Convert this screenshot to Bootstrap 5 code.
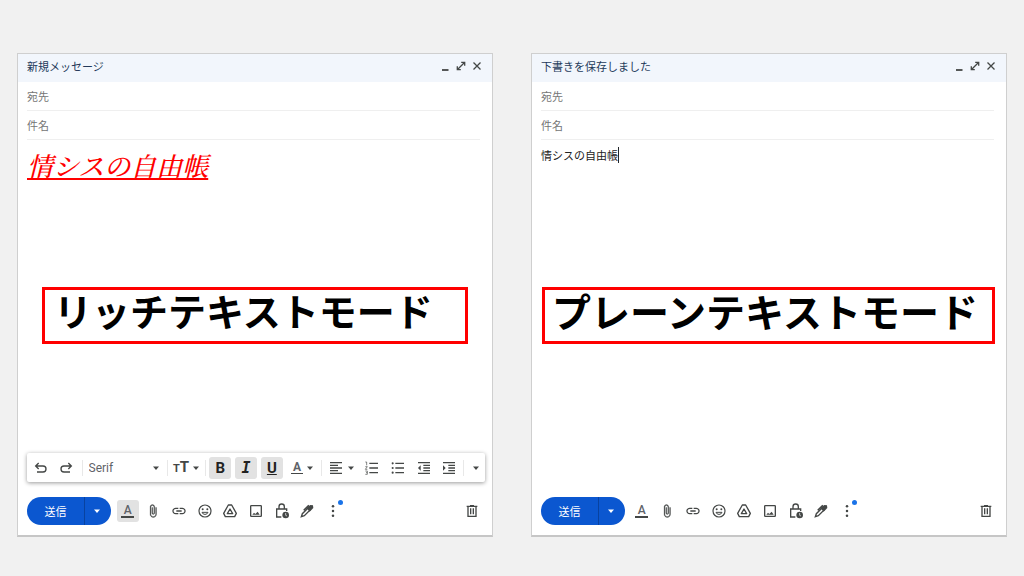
<!DOCTYPE html>
<html lang="ja">
<head>
<meta charset="utf-8">
<meta name="viewport" content="width=device-width, initial-scale=1">
<title>リッチテキストモードとプレーンテキストモード</title>
<link href="https://cdn.jsdelivr.net/npm/bootstrap@5.3.0/dist/css/bootstrap.min.css" rel="stylesheet">
<style>
body { background: #f1f1f1; font-family: "Noto Sans CJK JP", sans-serif; font-size: 11px; line-height: 16px; color: #222; }
svg { display: block; flex: none; }
.pane-grid { padding: 53px 17px 39px; gap: 38px; }
.composer { background: #fff; border: 1px solid #cfcfcf; border-bottom: 2px solid #c6c6c6; min-height: 484px; min-width: 0; }
.composer-head { background: #f2f6fc; color: #243a5a; height: 28px; padding: 0 7px 4px 9px; }
.composer-head h2 { font-size: 11px; line-height: 16px; font-weight: 400; }
.plain-btn { background: none; border: 0; padding: 0; color: #444746; display: flex; align-items: center; justify-content: center; border-radius: 3px; height: 22px; }
.win-btn { width: 16px; }
.field { height: 29px; margin: 0 12px 0 9px; border-bottom: 1px solid #efefef; }
.field input { border: 0; padding: 0; width: 100%; height: 28px; font-size: 11px; outline: 0; background: transparent; }
.field input::placeholder { color: #757575; opacity: 1; }
.message { min-height: 147px; padding: 7px 9px; outline: 0; }
.message-rich { font-family: "Noto Serif CJK JP", "Noto Sans CJK JP", serif; font-size: 26px; line-height: 36px; font-weight: 500; color: #f00; }
.message-rich em { text-decoration-thickness: 2px; }
.mode-label { border: 3px solid #f00; height: 57px; padding: 0 9px; font-size: 38px; line-height: 40px; font-weight: 700; color: #000; white-space: nowrap; }
.mode-label-wide { font-size: 39px; padding: 0 7px; margin-left: 10px; margin-right: 11px; }
.format-bar { height: 29px; margin: 0 7px 0 9px; padding-left: 2px; border-radius: 2px; box-shadow: 0 1px 4px rgba(0,0,0,.4); font-family: Roboto, sans-serif; }
.w-step { width: 25px; }
.w-key { width: 22px; }
.w-tail { width: 18px; }
.w-drop { width: 32px; gap: 3px; }
.pressed { background: #e2e2e2; color: #222; }
.rule-v { width: 1px; height: 16px; background: #e8e8e8; margin: 0 3px; flex: none; }
.font-pick { appearance: none; border: 0; padding: 0 0 0 3px; width: 79px; height: 22px; color: #5f6368; font-size: 12px;
  background: url("data:image/svg+xml,%3Csvg xmlns='http://www.w3.org/2000/svg' viewBox='0 0 8 8'%3E%3Cpath d='M1 2.5h6L4 6z' fill='%23444746'/%3E%3C/svg%3E") no-repeat right 4px center / 8px 8px; }
.glyph { font-size: 15px; line-height: 16px; font-weight: 700; }
.glyph-mono { font-family: "DejaVu Sans Mono", monospace; }
.t-small { font-size: 11px; line-height: 14px; font-weight: 700; }
.t-large { font-size: 15px; line-height: 14px; font-weight: 700; }
.tinted { font-family: Roboto, sans-serif; font-weight: 500; font-size: 12px; line-height: 11px; width: 13px; border-bottom: 2px solid #444746; text-align: center; color: #5f6368; }
.tinted-sm { width: 12px; border-bottom-width: 1px; font-weight: 700; }
.action-bar { padding: 0 9px; margin: 14px 0 9px; height: 30px; }
.send { width: 84px; height: 28px; border-radius: 14px; overflow: hidden; background: #0b57d0; }
.send button { background: none; border: 0; padding: 0; color: #fff; font-size: 11px; }
.send .send-more { width: 27px; border-left: 1px solid #0842a0; padding-right: 2px; }
.tools { display: grid; grid-template-columns: repeat(9, 1fr); width: 231px; margin-left: 4px; justify-items: center; }
.news-dot { position: absolute; width: 5px; height: 5px; border-radius: 50%; background: #1a73e8; top: 0; right: 1px; }
</style>
</head>
<body>
<svg width="0" height="0" class="position-absolute" aria-hidden="true">
  <defs>
    <symbol id="caret" viewBox="0 0 8 8"><path d="M1 2.5h6L4 6z" fill="currentColor"/></symbol>
    <symbol id="minimize" viewBox="0 0 12 12"><path d="M3 10h6.500" stroke="currentColor" stroke-width="1.800"/></symbol>
    <symbol id="expand" viewBox="0 0 12 12"><g fill="none" stroke="currentColor" stroke-width="1.300"><path d="M3 9L9 3M6.200 2.300h3.500v3.500M5.800 9.700H2.300V6.200"/></g></symbol>
    <symbol id="close" viewBox="0 0 12 12"><path d="M2.500 2.500l7 7M9.500 2.500l-7 7" stroke="currentColor" stroke-width="1.300"/></symbol>
    <symbol id="undo" viewBox="0 0 24 24"><path d="M8.500 4.500L4 9l4.500 4.500M4 9h11a4.500 4.500 0 0 1 0 9H6" fill="none" stroke="currentColor" stroke-width="2"/></symbol>
    <symbol id="redo" viewBox="0 0 24 24"><path d="M15.500 4.500L20 9l-4.500 4.500M20 9H9a4.500 4.500 0 0 0 0 9h9" fill="none" stroke="currentColor" stroke-width="2"/></symbol>
    <symbol id="align" viewBox="0 0 24 24"><path d="M3 4h18M3 8h12M3 12h18M3 16h12M3 20h18" stroke="currentColor" stroke-width="2"/></symbol>
    <symbol id="numbers" viewBox="0 0 24 24"><path d="M8 5h13M8 12h13M8 19h13" stroke="currentColor" stroke-width="2"/><path d="M2 3h2v5M2 10h3l-3 4h3M2 16.500h3v5H2M3 19h2" fill="none" stroke="currentColor"/></symbol>
    <symbol id="bullets" viewBox="0 0 24 24"><path d="M8 5h13M8 12h13M8 19h13" stroke="currentColor" stroke-width="2"/><g fill="currentColor"><circle cx="4" cy="5" r="1.600"/><circle cx="4" cy="12" r="1.600"/><circle cx="4" cy="19" r="1.600"/></g></symbol>
    <symbol id="outdent" viewBox="0 0 24 24"><path d="M3 4h18M11 8h10M11 12h10M11 16h10M3 20h18" stroke="currentColor" stroke-width="2"/><path d="M3 12l4-4v8z" fill="currentColor"/></symbol>
    <symbol id="indent" viewBox="0 0 24 24"><path d="M3 4h18M11 8h10M11 12h10M11 16h10M3 20h18" stroke="currentColor" stroke-width="2"/><path d="M7 12L3 8v8z" fill="currentColor"/></symbol>
    <symbol id="clip" viewBox="0 0 24 24"><path fill="currentColor" stroke="currentColor" stroke-width=".5" d="M16.500 6v11.500c0 2.210-1.790 4-4 4s-4-1.790-4-4V5c0-1.380 1.120-2.500 2.500-2.500s2.500 1.120 2.500 2.500v10.500c0 .55-.45 1-1 1s-1-.45-1-1V6H10v9.500c0 1.380 1.120 2.500 2.500 2.500s2.500-1.120 2.500-2.500V5c0-2.210-1.790-4-4-4S7 2.790 7 5v12.500c0 3.040 2.460 5.500 5.500 5.500s5.500-2.460 5.500-5.500V6h-1.500z"/></symbol>
    <symbol id="link" viewBox="0 0 24 24"><path fill="currentColor" d="M3.900 12c0-1.710 1.390-3.100 3.100-3.100h4V7H7c-2.760 0-5 2.240-5 5s2.240 5 5 5h4v-1.900H7c-1.710 0-3.100-1.390-3.100-3.100zM8 13h8v-2H8v2zm9-6h-4v1.900h4c1.710 0 3.100 1.390 3.100 3.100s-1.390 3.100-3.100 3.100h-4V17h4c2.760 0 5-2.240 5-5s-2.240-5-5-5z"/></symbol>
    <symbol id="smile" viewBox="0 0 24 24"><circle cx="12" cy="12" r="9" fill="none" stroke="currentColor" stroke-width="1.800"/><circle cx="8.500" cy="9.500" r="1.500" fill="currentColor"/><circle cx="15.500" cy="9.500" r="1.500" fill="currentColor"/><path d="M7.500 14h9a4.800 4.800 0 0 1-9 0z" fill="none" stroke="currentColor" stroke-width="1.500"/></symbol>
    <symbol id="drive" viewBox="0 0 24 24"><g fill="none" stroke="currentColor" stroke-width="2" stroke-linejoin="round"><path d="M9.500 3h5L21.500 15.500l-2.500 5H5l-2.500-5z"/><path d="M12 9l4 7H8z"/></g></symbol>
    <symbol id="photo" viewBox="0 0 24 24"><rect x="4" y="4" width="16" height="16" rx="1" fill="none" stroke="currentColor" stroke-width="2"/><path d="M6.500 17.500l2.500-3 2 2 3.500-3.500 3 4.500z" fill="currentColor"/></symbol>
    <symbol id="lock" viewBox="0 0 24 24"><path d="M11 21H4V9h15v3M7.500 9V5.500a4 4 0 0 1 8 0V9" fill="none" stroke="currentColor" stroke-width="2"/><circle cx="17.500" cy="18" r="5" fill="currentColor"/><path d="M17.500 15v3.500l2 1" fill="none" stroke="#fff"/></symbol>
    <symbol id="pen" viewBox="0 0 24 24"><path d="M3.500 20.500l1.500-4.500L14 7l3 3-9 9zM7 11l7-7 2 1.500" fill="none" stroke="currentColor" stroke-width="2"/><path d="M11.500 8L17 3l4 .5.5 4L16 13z" fill="currentColor"/></symbol>
    <symbol id="dots" viewBox="0 0 24 24"><g fill="currentColor"><circle cx="12" cy="5" r="1.900"/><circle cx="12" cy="12" r="1.900"/><circle cx="12" cy="19" r="1.900"/></g></symbol>
    <symbol id="trash" viewBox="0 0 24 24"><path d="M4 5h16M9 4h6M6 5v15h12V5M10 8v9M14 8v9" fill="none" stroke="currentColor" stroke-width="2"/></symbol>
  </defs>
</svg>

<main class="pane-grid d-flex">
  <section class="composer d-flex flex-column flex-fill w-50">
    <header class="composer-head d-flex align-items-center">
      <h2 class="m-0 me-auto">新規メッセージ</h2>
      <button class="plain-btn win-btn" type="button" aria-label="最小化"><svg width="12" height="12"><use href="#minimize"/></svg></button>
      <button class="plain-btn win-btn" type="button" aria-label="全画面表示"><svg width="12" height="12"><use href="#expand"/></svg></button>
      <button class="plain-btn win-btn" type="button" aria-label="閉じる"><svg width="12" height="12"><use href="#close"/></svg></button>
    </header>
    <div class="field"><input type="text" placeholder="宛先" aria-label="宛先"></div>
    <div class="field"><input type="text" placeholder="件名" aria-label="件名"></div>
    <div class="message message-rich" contenteditable="true" role="textbox" aria-label="本文" spellcheck="false"><em class="text-decoration-underline">情シスの自由帳</em></div>
    <div class="mode-label mb-auto ms-4 me-4">リッチテキストモード</div>

    <div class="format-bar d-flex align-items-center" role="toolbar" aria-label="書式設定">
      <button class="plain-btn w-step" type="button" aria-label="元に戻す"><svg width="16" height="16"><use href="#undo"/></svg></button>
      <button class="plain-btn w-step" type="button" aria-label="やり直す"><svg width="16" height="16"><use href="#redo"/></svg></button>
      <span class="rule-v"></span>
      <select class="font-pick" aria-label="フォント"><option>Serif</option></select>
      <span class="rule-v"></span>
      <button class="plain-btn w-drop" type="button" aria-label="サイズ"><span class="d-flex align-items-baseline"><span class="t-small">T</span><span class="t-large">T</span></span><svg width="8" height="8"><use href="#caret"/></svg></button>
      <span class="rule-v"></span>
      <button class="plain-btn w-key pressed glyph" type="button" aria-label="太字">B</button>
      <button class="plain-btn w-key pressed glyph glyph-mono fst-italic ms-1" type="button" aria-label="斜体">I</button>
      <button class="plain-btn w-key pressed glyph text-decoration-underline ms-1" type="button" aria-label="下線">U</button>
      <button class="plain-btn w-drop ms-1" type="button" aria-label="文字の色"><span class="tinted tinted-sm">A</span><svg width="8" height="8"><use href="#caret"/></svg></button>
      <span class="rule-v"></span>
      <button class="plain-btn w-drop" type="button" aria-label="配置"><svg width="16" height="16"><use href="#align"/></svg><svg width="8" height="8"><use href="#caret"/></svg></button>
      <button class="plain-btn w-key ms-1" type="button" aria-label="番号付きリスト"><svg width="16" height="16"><use href="#numbers"/></svg></button>
      <button class="plain-btn w-key ms-1" type="button" aria-label="箇条書き"><svg width="16" height="16"><use href="#bullets"/></svg></button>
      <button class="plain-btn w-key ms-1" type="button" aria-label="インデント減"><svg width="16" height="16"><use href="#outdent"/></svg></button>
      <button class="plain-btn w-key ms-1" type="button" aria-label="インデント増"><svg width="16" height="16"><use href="#indent"/></svg></button>
      <span class="rule-v"></span>
      <button class="plain-btn w-tail" type="button" aria-label="その他の書式"><svg width="8" height="8"><use href="#caret"/></svg></button>
    </div>

    <div class="action-bar d-flex align-items-center">
      <div class="send d-flex">
        <button class="flex-fill" type="button">送信</button>
        <button class="send-more d-flex align-items-center justify-content-center" type="button" aria-label="その他の送信オプション"><svg width="8" height="8"><use href="#caret"/></svg></button>
      </div>
      <div class="tools">
        <button class="plain-btn w-key pressed" type="button" aria-label="書式設定オプション"><span class="tinted">A</span></button>
        <button class="plain-btn w-key" type="button" aria-label="ファイルを添付"><svg width="14" height="14"><use href="#clip"/></svg></button>
        <button class="plain-btn w-key" type="button" aria-label="リンクを挿入"><svg width="16" height="16"><use href="#link"/></svg></button>
        <button class="plain-btn w-key" type="button" aria-label="絵文字を挿入"><svg width="16" height="16"><use href="#smile"/></svg></button>
        <button class="plain-btn w-key" type="button" aria-label="ドライブ"><svg width="16" height="16"><use href="#drive"/></svg></button>
        <button class="plain-btn w-key" type="button" aria-label="写真を挿入"><svg width="16" height="16"><use href="#photo"/></svg></button>
        <button class="plain-btn w-key" type="button" aria-label="情報保護モード"><svg width="16" height="16"><use href="#lock"/></svg></button>
        <button class="plain-btn w-key" type="button" aria-label="署名を挿入"><svg width="16" height="16"><use href="#pen"/></svg></button>
        <button class="plain-btn w-key position-relative" type="button" aria-label="その他のオプション"><svg width="16" height="16"><use href="#dots"/></svg><span class="news-dot"></span></button>
      </div>
      <button class="plain-btn w-key ms-auto" type="button" aria-label="下書きを破棄"><svg width="16" height="16"><use href="#trash"/></svg></button>
    </div>
  </section>

  <section class="composer d-flex flex-column flex-fill w-50">
    <header class="composer-head d-flex align-items-center">
      <h2 class="m-0 me-auto">下書きを保存しました</h2>
      <button class="plain-btn win-btn" type="button" aria-label="最小化"><svg width="12" height="12"><use href="#minimize"/></svg></button>
      <button class="plain-btn win-btn" type="button" aria-label="全画面表示"><svg width="12" height="12"><use href="#expand"/></svg></button>
      <button class="plain-btn win-btn" type="button" aria-label="閉じる"><svg width="12" height="12"><use href="#close"/></svg></button>
    </header>
    <div class="field"><input type="text" placeholder="宛先" aria-label="宛先"></div>
    <div class="field"><input type="text" placeholder="件名" aria-label="件名"></div>
    <div class="message" contenteditable="true" role="textbox" aria-label="本文" spellcheck="false"><span class="border-end border-dark">情シスの自由帳</span></div>
    <div class="mode-label mode-label-wide mb-auto">プレーンテキストモード</div>

    <div class="action-bar d-flex align-items-center">
      <div class="send d-flex">
        <button class="flex-fill" type="button">送信</button>
        <button class="send-more d-flex align-items-center justify-content-center" type="button" aria-label="その他の送信オプション"><svg width="8" height="8"><use href="#caret"/></svg></button>
      </div>
      <div class="tools">
        <button class="plain-btn w-key" type="button" aria-label="書式設定オプション"><span class="tinted">A</span></button>
        <button class="plain-btn w-key" type="button" aria-label="ファイルを添付"><svg width="14" height="14"><use href="#clip"/></svg></button>
        <button class="plain-btn w-key" type="button" aria-label="リンクを挿入"><svg width="16" height="16"><use href="#link"/></svg></button>
        <button class="plain-btn w-key" type="button" aria-label="絵文字を挿入"><svg width="16" height="16"><use href="#smile"/></svg></button>
        <button class="plain-btn w-key" type="button" aria-label="ドライブ"><svg width="16" height="16"><use href="#drive"/></svg></button>
        <button class="plain-btn w-key" type="button" aria-label="写真を挿入"><svg width="16" height="16"><use href="#photo"/></svg></button>
        <button class="plain-btn w-key" type="button" aria-label="情報保護モード"><svg width="16" height="16"><use href="#lock"/></svg></button>
        <button class="plain-btn w-key" type="button" aria-label="署名を挿入"><svg width="16" height="16"><use href="#pen"/></svg></button>
        <button class="plain-btn w-key position-relative" type="button" aria-label="その他のオプション"><svg width="16" height="16"><use href="#dots"/></svg><span class="news-dot"></span></button>
      </div>
      <button class="plain-btn w-key ms-auto" type="button" aria-label="下書きを破棄"><svg width="16" height="16"><use href="#trash"/></svg></button>
    </div>
  </section>
</main>
<script src="https://cdn.jsdelivr.net/npm/bootstrap@5.3.0/dist/js/bootstrap.bundle.min.js"></script>
</body>
</html>
